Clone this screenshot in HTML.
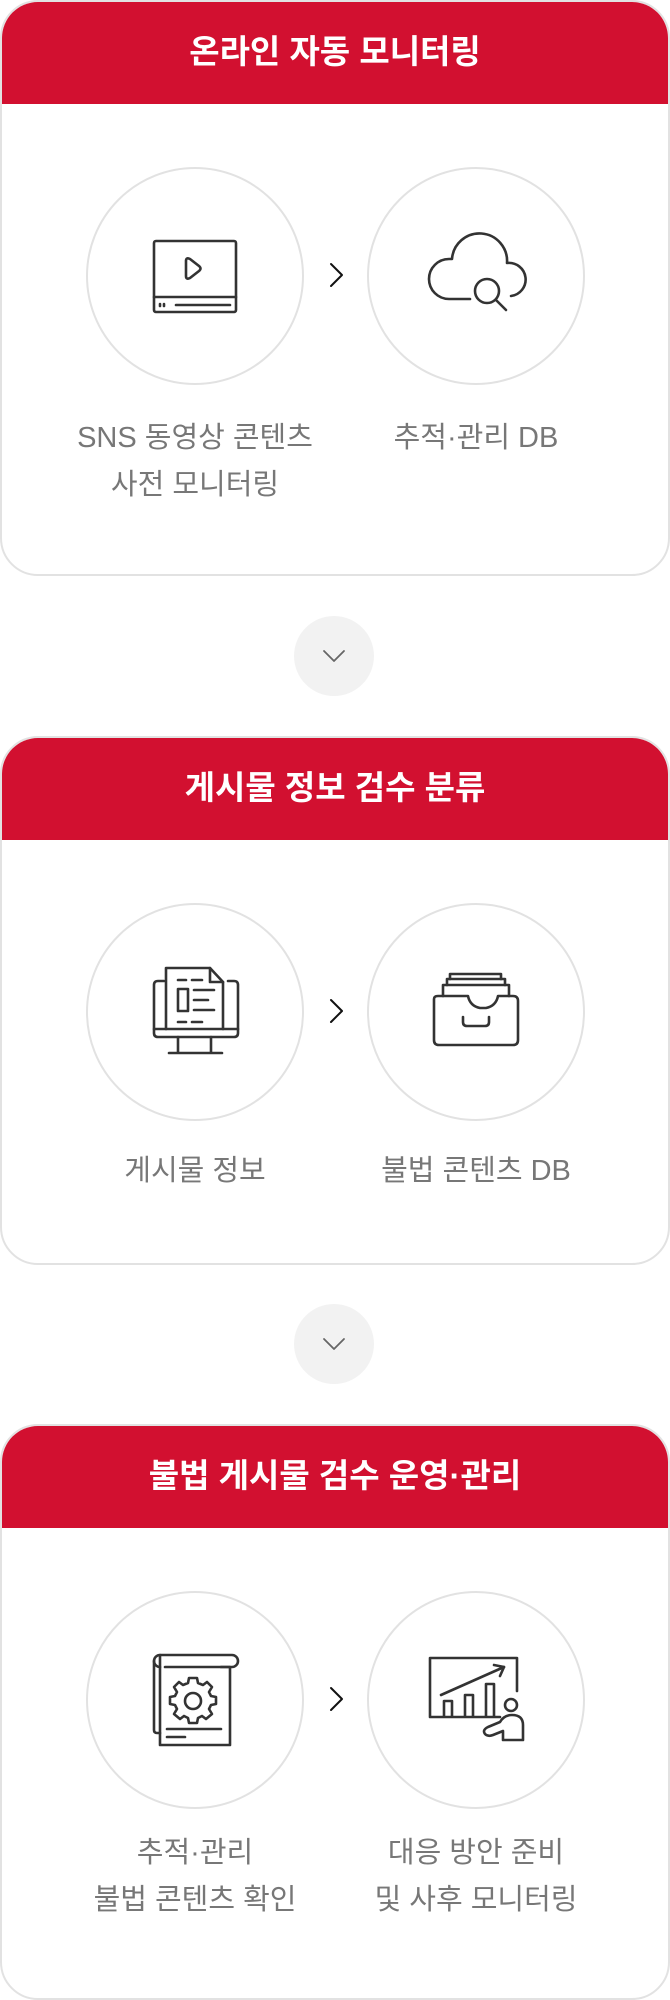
<!DOCTYPE html>
<html><head><meta charset="utf-8"><style>
html,body{margin:0;padding:0;background:#fff;}
body{width:670px;height:2000px;position:relative;overflow:hidden;font-family:"Liberation Sans","Noto Sans CJK KR",sans-serif;}
.card{position:absolute;left:0;width:666px;border:2px solid #e2e2e2;border-radius:38px;overflow:hidden;background:#fff;box-sizing:content-box;}
.hd{height:104px;background:#d21030;color:#fff;font-weight:bold;font-size:33px;text-align:center;line-height:104px;margin:-2px -2px 0 -2px;}
.circ{position:absolute;width:218px;height:218px;border:2px solid #e2e2e2;border-radius:50%;box-sizing:border-box;}
.lbl{position:absolute;width:320px;text-align:center;color:#777;font-size:29px;line-height:47px;}
.down{position:absolute;left:294px;width:80px;height:80px;border-radius:50%;background:#f2f2f2;}
svg.ic{position:absolute;left:0;top:0;}
</style></head><body>

<div class="card" style="top:0;height:572px;"><div class="hd">온라인 자동 모니터링</div></div>
<div class="circ" style="left:86px;top:167px"></div>
<div class="circ" style="left:367px;top:167px"></div>
<div class="lbl" style="left:35px;top:415px">SNS 동영상 콘텐츠<br>사전 모니터링</div>
<div class="lbl" style="left:316px;top:415px">추적·관리 DB</div>
<div class="down" style="top:616px"></div>

<div class="card" style="top:736px;height:525px;"><div class="hd">게시물 정보 검수 분류</div></div>
<div class="circ" style="left:86px;top:903px"></div>
<div class="circ" style="left:367px;top:903px"></div>
<div class="lbl" style="left:35px;top:1148px">게시물 정보</div>
<div class="lbl" style="left:316px;top:1148px">불법 콘텐츠 DB</div>
<div class="down" style="top:1304px"></div>

<div class="card" style="top:1424px;height:572px;"><div class="hd">불법 게시물 검수 운영·관리</div></div>
<div class="circ" style="left:86px;top:1591px"></div>
<div class="circ" style="left:367px;top:1591px"></div>
<div class="lbl" style="left:35px;top:1830px">추적·관리<br>불법 콘텐츠 확인</div>
<div class="lbl" style="left:316px;top:1830px">대응 방안 준비<br>및 사후 모니터링</div>

<svg class="ic" width="670" height="2000" viewBox="0 0 670 2000" fill="none" stroke="#333" stroke-width="2.6" stroke-linecap="round" stroke-linejoin="round">
<path d="M331 264 L342 275 L331 286" stroke="#111" stroke-width="2"/>
<path d="M331 1000 L342 1011 L331 1022" stroke="#111" stroke-width="2"/>
<path d="M331 1688 L342 1699 L331 1710" stroke="#111" stroke-width="2"/>
<path d="M324 651 L334 661 L344 651" stroke="#666" stroke-width="1.8"/>
<path d="M324 1339 L334 1349 L344 1339" stroke="#666" stroke-width="1.8"/>

<!-- video -->
<rect x="154" y="241" width="82" height="71" rx="2"/>
<line x1="154" y1="297" x2="236" y2="297"/>
<path d="M186 261 L186 276 Q186 280 190 278 L199 271 Q202 268.5 199 266 L190 259 Q186 257 186 261Z"/>
<line x1="160" y1="304" x2="160" y2="306"/><line x1="164" y1="304" x2="164" y2="306"/>
<line x1="176" y1="305" x2="230" y2="305"/>

<!-- cloud search -->
<path d="M470 299 L449 299 A20 20 0 0 1 449 259 L452 259 A27 27 0 0 1 507 263 A16.5 16.5 0 0 1 511 296"/>
<circle cx="487" cy="291" r="12"/>
<line x1="496" y1="300" x2="506" y2="310"/>

<!-- monitor doc -->
<path d="M164 981 L158 981 Q154 981 154 985 L154 1033 Q154 1037 158 1037 L234 1037 Q238 1037 238 1033 L238 985 Q238 981 234 981 L228 981"/>
<line x1="154" y1="1029" x2="238" y2="1029"/>
<line x1="178" y1="1037" x2="178" y2="1052"/><line x1="211" y1="1037" x2="211" y2="1052"/>
<line x1="169" y1="1053" x2="222" y2="1053"/>
<path d="M166 1029 L166 968 L210 968 L223 982 L223 1029"/>
<path d="M210 968 L210 982 L223 982"/>
<line x1="178" y1="980" x2="186" y2="980"/><line x1="192" y1="980" x2="202" y2="980"/>
<rect x="178" y="989" width="10" height="22"/>
<line x1="194" y1="990" x2="214" y2="990"/><line x1="194" y1="1000" x2="208" y2="1000"/><line x1="194" y1="1010" x2="214" y2="1010"/>
<line x1="178" y1="1022" x2="186" y2="1022"/><line x1="192" y1="1022" x2="202" y2="1022"/>

<!-- drawer -->
<path d="M434 999 Q434 996 438 996 L468 996 Q470 1006 480 1008 L486 1008 Q496 1006 498 996 L513 996 Q518 996 518 1001 L518 1040 Q518 1045 513 1045 L439 1045 Q434 1045 434 1040 Z"/>
<path d="M443 996 L443 985 L509 985 L509 996"/>
<path d="M447 985 L447 979 L505 979 L505 985"/>
<path d="M450 979 L450 974 L501 974 L501 979"/>
<path d="M463 1017 L463 1022 Q463 1026 467 1026 L485 1026 Q489 1026 489 1022 L489 1017"/>

<!-- doc gear -->
<path d="M160 1667 A6 6 0 0 1 160 1655 L232 1655 A6 6 0 0 1 232 1667 L221 1667"/>
<path d="M154 1661 L154 1730 Q154 1733 157 1733 L160 1733"/>
<path d="M160 1655 L160 1745 L230 1745 L230 1667 L165 1667"/>
<circle cx="193" cy="1701" r="8"/>
<path d="M189 1683 L197 1683 L198 1688 L203 1690 L207 1687 L212 1692 L209 1697 L211 1701 L216 1702 L216 1709 L211 1710 L209 1714 L212 1719 L206 1724 L202 1721 L198 1723 L197 1728 L189 1728 L188 1723 L184 1721 L180 1724 L174 1719 L177 1714 L175 1710 L170 1709 L170 1702 L175 1701 L177 1697 L174 1692 L179 1687 L183 1690 L188 1688 Z" transform="translate(0,-5)"/>
<line x1="167" y1="1729" x2="221" y2="1729"/><line x1="167" y1="1737" x2="185" y2="1737"/>

<!-- chart presenter -->
<path d="M500 1717 L430 1717 L430 1658 L517 1658 L517 1691"/>
<line x1="441" y1="1695" x2="504" y2="1667"/>
<path d="M494 1665 L504 1667 L500 1676"/>
<path d="M444 1716 L444 1701 L452 1701 L452 1716"/>
<path d="M465 1716 L465 1695 L473 1695 L473 1716"/>
<path d="M486 1716 L486 1684 L494 1684 L494 1716"/>
<circle cx="511" cy="1705" r="6"/>
<path d="M523 1740 L523 1725 Q523 1715 512 1715 Q504 1715 500 1722 L488 1727 Q482 1730 485 1734 Q488 1737 493 1735 L503 1731 L503 1740 Z"/>
</svg>
</body></html>
